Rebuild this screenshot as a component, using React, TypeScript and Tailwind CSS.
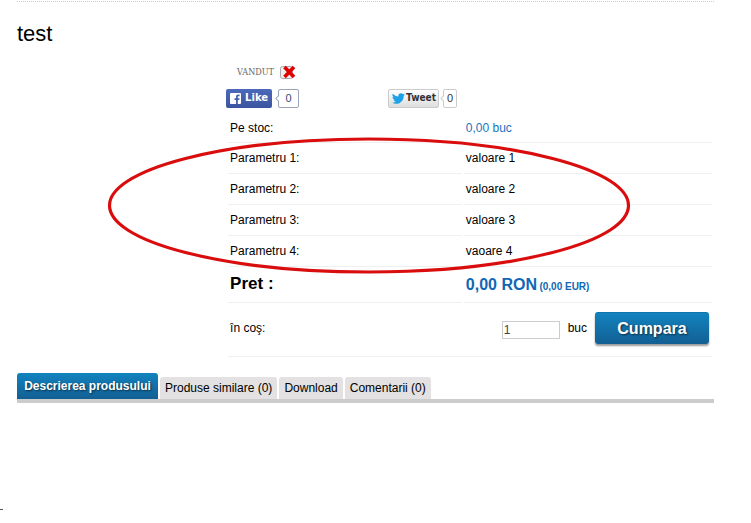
const params = [
  { label: "Parametru 1:", value: "valoare 1" },
  { label: "Parametru 2:", value: "valoare 2" },
  { label: "Parametru 3:", value: "valoare 3" },
  { label: "Parametru 4:", value: "vaoare 4" },
];

const tabs = ["Produse similare (0)", "Download", "Comentarii (0)"];

function SocialButtons() {
  return (
    <div className="flex h-5 mt-2">
      <div className="w-[162px] flex items-center">
        <button className="flex items-center gap-1 h-[19px] w-[46px] pl-1 rounded-xs bg-linear-to-b from-[#4c69ba] to-[#3b55a0] text-white text-[10px] font-bold font-['DejaVu_Sans',sans-serif]">
          <svg className="shrink-0" width="11" height="11" viewBox="0 0 11 11">
            <rect width="11" height="11" rx="1" fill="#fff" />
            <path d="M6 11V7H4.500V5.300H6V4C6 2.400 6.900 1.600 8.300 1.600H9.600V3.200H8.700C8 3.200 7.800 3.500 7.800 4.100V5.300H9.600L9.300 7H7.800V11Z" fill="#4460ae" />
          </svg>
          Like
        </button>
        <Count className="w-[21px] border-[#9aa3b8] text-[#3b4a70]" stroke="#7f8aa5" gap="ml-[3px]" />
      </div>
      <div className="flex items-center">
        <button className="flex items-center gap-px h-[19px] w-[51px] pl-[3px] rounded-xs border border-[#ccc] bg-linear-to-b from-white to-[#dedede] text-[#333] text-[10px] font-bold font-['DejaVu_Sans_Condensed','DejaVu_Sans',sans-serif]">
          <svg className="shrink-0" width="13" height="11" viewBox="0 0 24 20" fill="#1da1e8">
            <path d="M23.950 2.570a10 10 0 0 1-2.820.770 4.960 4.960 0 0 0 2.160-2.720c-.950.550-2 .960-3.130 1.180A4.920 4.920 0 0 0 11.780 6.290C7.690 6.090 4.070 4.130 1.640 1.160A4.900 4.900 0 0 0 3.160 7.720a4.900 4.900 0 0 1-2.230-.610v.060c0 2.390 1.700 4.380 3.950 4.830a5 5 0 0 1-2.210.080 4.940 4.940 0 0 0 4.600 3.420A9.870 9.870 0 0 1 0 17.540 14 14 0 0 0 7.550 19.750c9.050 0 14-7.500 14-13.980 0-.210 0-.420-.020-.630a9.900 9.900 0 0 0 2.420-2.570z" />
          </svg>
          Tweet
        </button>
        <Count className="w-[14px] border-[#ccc] text-[#333]" stroke="#bbb" gap="ml-px" />
      </div>
    </div>
  );
}

function Count({ className, stroke, gap }: { className: string; stroke: string; gap: string }) {
  return (
    <div className={`flex items-center ${gap}`}>
      <svg className="relative z-10 -mr-px" width="4" height="7" viewBox="0 0 4 7">
        <path d="M4 0.500L0.800 3.500L4 6.500" fill="#fff" stroke={stroke} />
      </svg>
      <span className={`h-[19px] flex items-center justify-center rounded-xs border bg-white text-[11px] ${className}`}>
        0
      </span>
    </div>
  );
}

export default function App() {
  return (
    <div className="min-h-screen bg-white text-black text-xs font-['Liberation_Sans',Arial,sans-serif]">
      <main className="relative pt-px pl-[17px] pr-[37px]">
        <div className="border-t border-dotted border-[#ccc]" />
        <h1 className="mt-4 text-[22px] leading-8">test</h1>

        <section className="ml-[30%] pt-[14px]">
          <div className="flex items-center gap-[6px] h-4 pl-[11px]">
            <span className="text-[9px] text-[#666] font-['DejaVu_Serif_Condensed','DejaVu_Serif',serif]">VANDUT</span>
            <svg width="17" height="14" viewBox="0 0 17 14">
              <rect x="0.500" y="1.500" width="12" height="12" rx="2" fill="#eee" stroke="#aaa" />
              <path d="M4.500 2L14 12M14 2L4.500 12" stroke="#e00000" strokeWidth="3.600" />
            </svg>
          </div>

          <SocialButtons />

          <table className="w-full table-fixed border-separate border-spacing-x-[2px] border-spacing-y-0 mt-1">
            <colgroup>
              <col className="w-[48.5%]" />
              <col />
            </colgroup>
            <tbody className="[&_td]:border-b [&_td]:border-[#f0f0f0] [&_td]:px-[2px] [&_th]:border-b [&_th]:border-[#f0f0f0] [&_th]:px-[2px] [&_th]:text-left">
              <tr className="h-[31px]">
                <th scope="row" className="pt-[2px] font-normal">Pe stoc:</th>
                <td className="pt-[2px] text-[#1873bd]">0,00 buc</td>
              </tr>
              {params.map((p) => (
                <tr key={p.label} className="h-[31px]">
                  <th scope="row" className="font-normal">{p.label}</th>
                  <td>{p.value}</td>
                </tr>
              ))}
              <tr className="h-9">
                <th scope="row" className="text-[17px] font-bold">Pret :</th>
                <td className="text-[#1067b5] font-bold text-base">
                  0,00 RON <span className="-ml-[2px] text-[10px]">(0,00 EUR)</span>
                </td>
              </tr>
              <tr className="h-[54px]">
                <td colSpan={2}>
                  <div className="flex items-center justify-between pb-[3px]">
                    <label htmlFor="qty">în coş:</label>
                    <div className="flex items-center">
                      <input
                        id="qty"
                        type="text"
                        defaultValue="1"
                        className="w-[58px] h-[18px] mt-1 mr-2 px-px border border-[#ccc] bg-white text-xs text-[#444]"
                      />
                      <span>buc</span>
                      <button className="ml-2 mr-px w-[114px] h-8 rounded-[3px] bg-linear-to-b from-[#1283bf] to-[#125f93] border-t border-[#0f74ab] text-white text-base font-bold shadow-[0_2px_2px_rgba(0,0,0,0.4)] [text-shadow:1px_1px_2px_rgba(0,0,0,0.6)]">
                        Cumpara
                      </button>
                    </div>
                  </div>
                </td>
              </tr>
            </tbody>
          </table>
        </section>

        <nav className="mt-4 flex items-end gap-[2px] border-b-4 border-[#ccc]">
          <button className="h-[26px] w-[141px] rounded-t-[3px] bg-linear-to-b from-[#1283bf] to-[#125f93] text-white text-xs font-bold [text-shadow:1px_1px_2px_rgba(0,0,0,0.6)]">
            Descrierea produsului
          </button>
          {tabs.map((tab) => (
            <button key={tab} className="h-[22px] px-[5px] rounded-t-[3px] bg-[#e3e1e1]">
              {tab}
            </button>
          ))}
        </nav>

        <svg
          className="absolute left-[106px] top-[136px] pointer-events-none"
          width="526"
          height="139"
          viewBox="0 0 526 139"
          fill="none"
        >
          <ellipse cx="263" cy="69.500" rx="259.500" ry="66.500" stroke="#d90d0d" strokeWidth="3.200" />
        </svg>
      </main>
      <footer className="pt-[106px]">
        <div className="w-[3px] border-t border-[#555]" />
      </footer>
    </div>
  );
}
